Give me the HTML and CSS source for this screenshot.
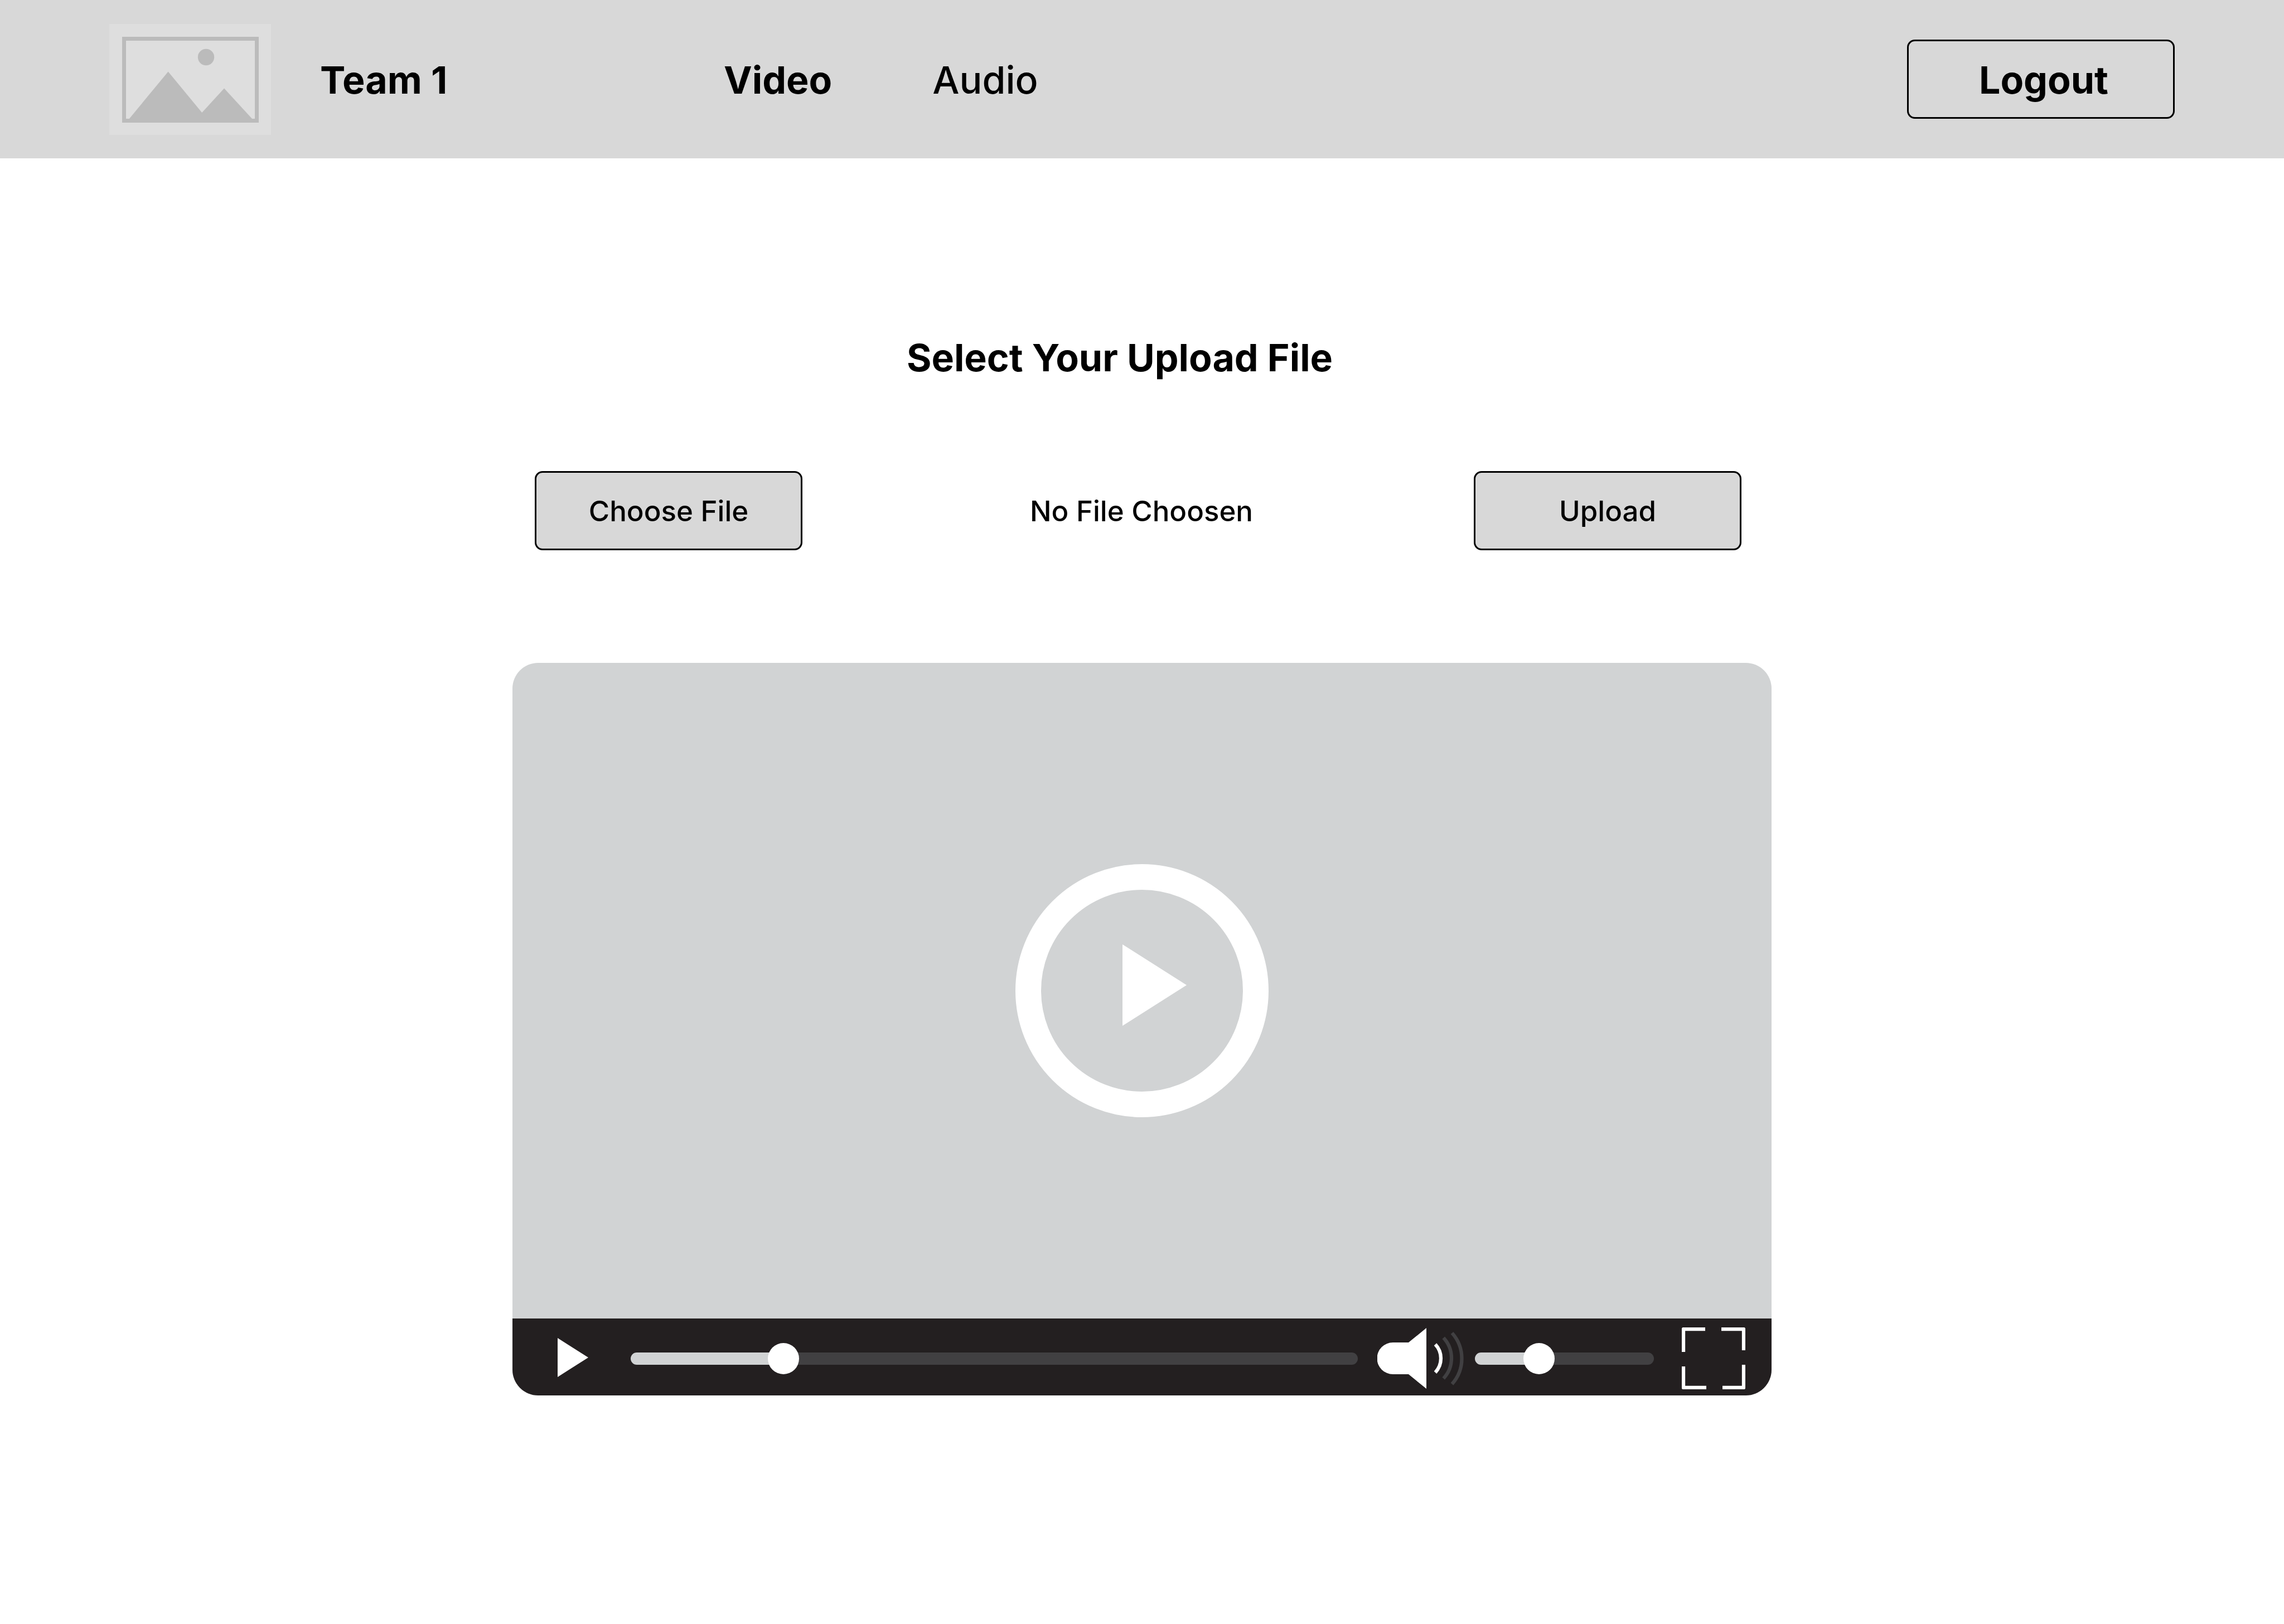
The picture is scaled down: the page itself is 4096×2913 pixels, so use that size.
FILE: index.html
```html
<!DOCTYPE html>
<html lang="en">
<head>
<meta charset="utf-8">
<meta name="viewport" content="width=device-width, initial-scale=1">
<title>Video upload</title>
<link rel="stylesheet" href="styles.css">
</head>
<body>
<header class="topbar">
  <div class="brand">
    <svg class="brand-logo" viewBox="0 0 290 199" role="img" aria-label="Team logo">
      <rect width="290" height="199" fill="#dedede"/>
      <rect x="26.500" y="26.500" width="238" height="147" fill="none" stroke="#bbbbbb" stroke-width="7"/>
      <circle cx="173.500" cy="59.500" r="14.700" fill="#bbbbbb"/>
      <path d="M35 171L105.600 85.400L166.200 159L206 115.500L257 171Z" fill="#bbbbbb"/>
    </svg>
    <span class="brand-name">Team 1</span>
  </div>
  <nav class="tabs" aria-label="Media type">
    <a class="tab tab-active" href="#video" aria-current="page">Video</a>
    <a class="tab" href="#audio">Audio</a>
  </nav>
  <button class="btn btn-logout" type="button">Logout</button>
</header>

<main class="content">
  <h1 class="title">Select Your Upload File</h1>
  <form class="upload">
    <button class="btn btn-filled" type="button">Choose File</button>
    <output class="upload-status">No File Choosen</output>
    <button class="btn btn-filled" type="button">Upload</button>
  </form>

  <section class="player" aria-label="Video player">
    <div class="screen">
      <button class="icon-btn" type="button" aria-label="Play video">
        <svg class="icon-big-play" viewBox="0 0 455 455" aria-hidden="true">
          <circle cx="227" cy="227" r="204" fill="none" stroke="#fff" stroke-width="46"/>
          <path d="M192 144L307 217L192 290Z" fill="#fff"/>
        </svg>
      </button>
    </div>
    <div class="controls">
      <button class="icon-btn" type="button" aria-label="Play">
        <svg class="icon-play" viewBox="0 0 55 73" aria-hidden="true">
          <path d="M0 0L55 35L0 70Z" fill="#fff"/>
        </svg>
      </button>
      <input class="slider seek" type="range" min="0" max="1000" value="197" style="--value: 20%" aria-label="Seek">
      <button class="icon-btn" type="button" aria-label="Mute">
        <svg class="icon-sound" viewBox="0 0 155 109" aria-hidden="true">
          <path d="M28 26H56L88 0V109L56 83H28A28.500 28.500 0 0 1 28 26Z" fill="#fff"/>
          <g fill="none" stroke-width="6.300">
            <path d="M104 29.400A36.800 36.800 0 0 1 104 79.800" stroke="#fff"/>
            <path d="M118.700 17.600A53.700 53.700 0 0 1 118.700 90.600" stroke="#414042"/>
            <path d="M134 9A68.700 68.700 0 0 1 134 100.600" stroke="#414042"/>
          </g>
        </svg>
      </button>
      <input class="slider volume" type="range" min="0" max="100" value="33" style="--value: 33%" aria-label="Volume">
      <button class="icon-btn" type="button" aria-label="Full screen">
        <svg class="icon-full" viewBox="0 0 114 111" aria-hidden="true">
          <path d="M3 44V3H42M71 3H111V41M3 70V108H44M111 67V108H73" fill="none" stroke="#fff" stroke-width="6.300" stroke-linejoin="round"/>
        </svg>
      </button>
    </div>
  </section>
</main>
</body>
</html>
```

FILE: styles.css
```css
* {
  box-sizing: border-box;
}

body {
  margin: 0;
  min-height: 100vh;
  background: #fff;
  color: #000;
  font-family: Inter, "Liberation Sans", sans-serif;
  font-size: 68px;
  font-weight: 500;
  line-height: 82px;
}

button {
  padding: 0;
  border: 0;
  background: none;
  color: inherit;
  font: inherit;
  cursor: pointer;
}

svg {
  display: block;
}

/* Top bar */
.topbar {
  display: grid;
  grid-template-columns: 1102px 1fr auto;
  align-items: center;
  height: 284px;
  padding: 0 196px;
  background: #d8d8d8;
}

.brand {
  display: flex;
  align-items: center;
  gap: 88px;
}

.brand-logo {
  width: 290px;
  height: 199px;
}

.brand-name,
.tabs {
  padding-top: 2px;
}

.brand-name,
.tab-active,
.btn-logout,
.title {
  font-weight: 700;
}

.tabs {
  display: flex;
  gap: 180px;
}

.tab {
  color: inherit;
  text-decoration: none;
}

.btn {
  width: 480px;
  height: 142px;
  padding-top: 2px;
  border: 3px solid #000;
  border-radius: 14px;
}

.btn-logout {
  padding-left: 10px;
}

.btn-filled {
  background: #d8d8d8;
}

/* Upload form */
.content {
  max-width: 2258px;
  margin: 0 auto;
  padding: 316px 0;
}

.title {
  margin: 0;
  padding-right: 80px;
  font-size: 68px;
  text-align: center;
}

.upload {
  display: flex;
  align-items: center;
  justify-content: space-between;
  margin-top: 163px;
  padding: 0 54px 0 40px;
  font-size: 51px;
  line-height: 62px;
}

.upload-status {
  padding: 2px 0 0 12px;
}

/* Player */
.player {
  margin-top: 202px;
  border-radius: 46px;
  overflow: hidden;
}

.screen {
  display: flex;
  align-items: center;
  justify-content: center;
  height: 1176px;
  background: #d1d3d4;
}

.icon-big-play {
  width: 455px;
  height: 455px;
}

.controls {
  display: flex;
  align-items: center;
  height: 138px;
  padding: 5px 47px 0 81px;
  background: #231f20;
}

.icon-play {
  width: 55px;
  height: 73px;
}

.icon-sound {
  width: 155px;
  height: 109px;
}

.icon-full {
  width: 114px;
  height: 111px;
}

.slider {
  height: 56px;
  appearance: none;
  background: none;
}

.seek {
  flex: 1;
  min-width: 0;
  margin: 0 35px 0 76px;
}

.volume {
  width: 321px;
  margin: 0 50px 0 20px;
}

.slider::-webkit-slider-runnable-track {
  height: 22px;
  border-radius: 11px;
  background: linear-gradient(to right, #d1d3d4 var(--value), #414042 var(--value));
}

.slider::-webkit-slider-thumb {
  appearance: none;
  width: 56px;
  height: 56px;
  margin-top: -17px;
  border-radius: 50%;
  background: #fff;
}
```
